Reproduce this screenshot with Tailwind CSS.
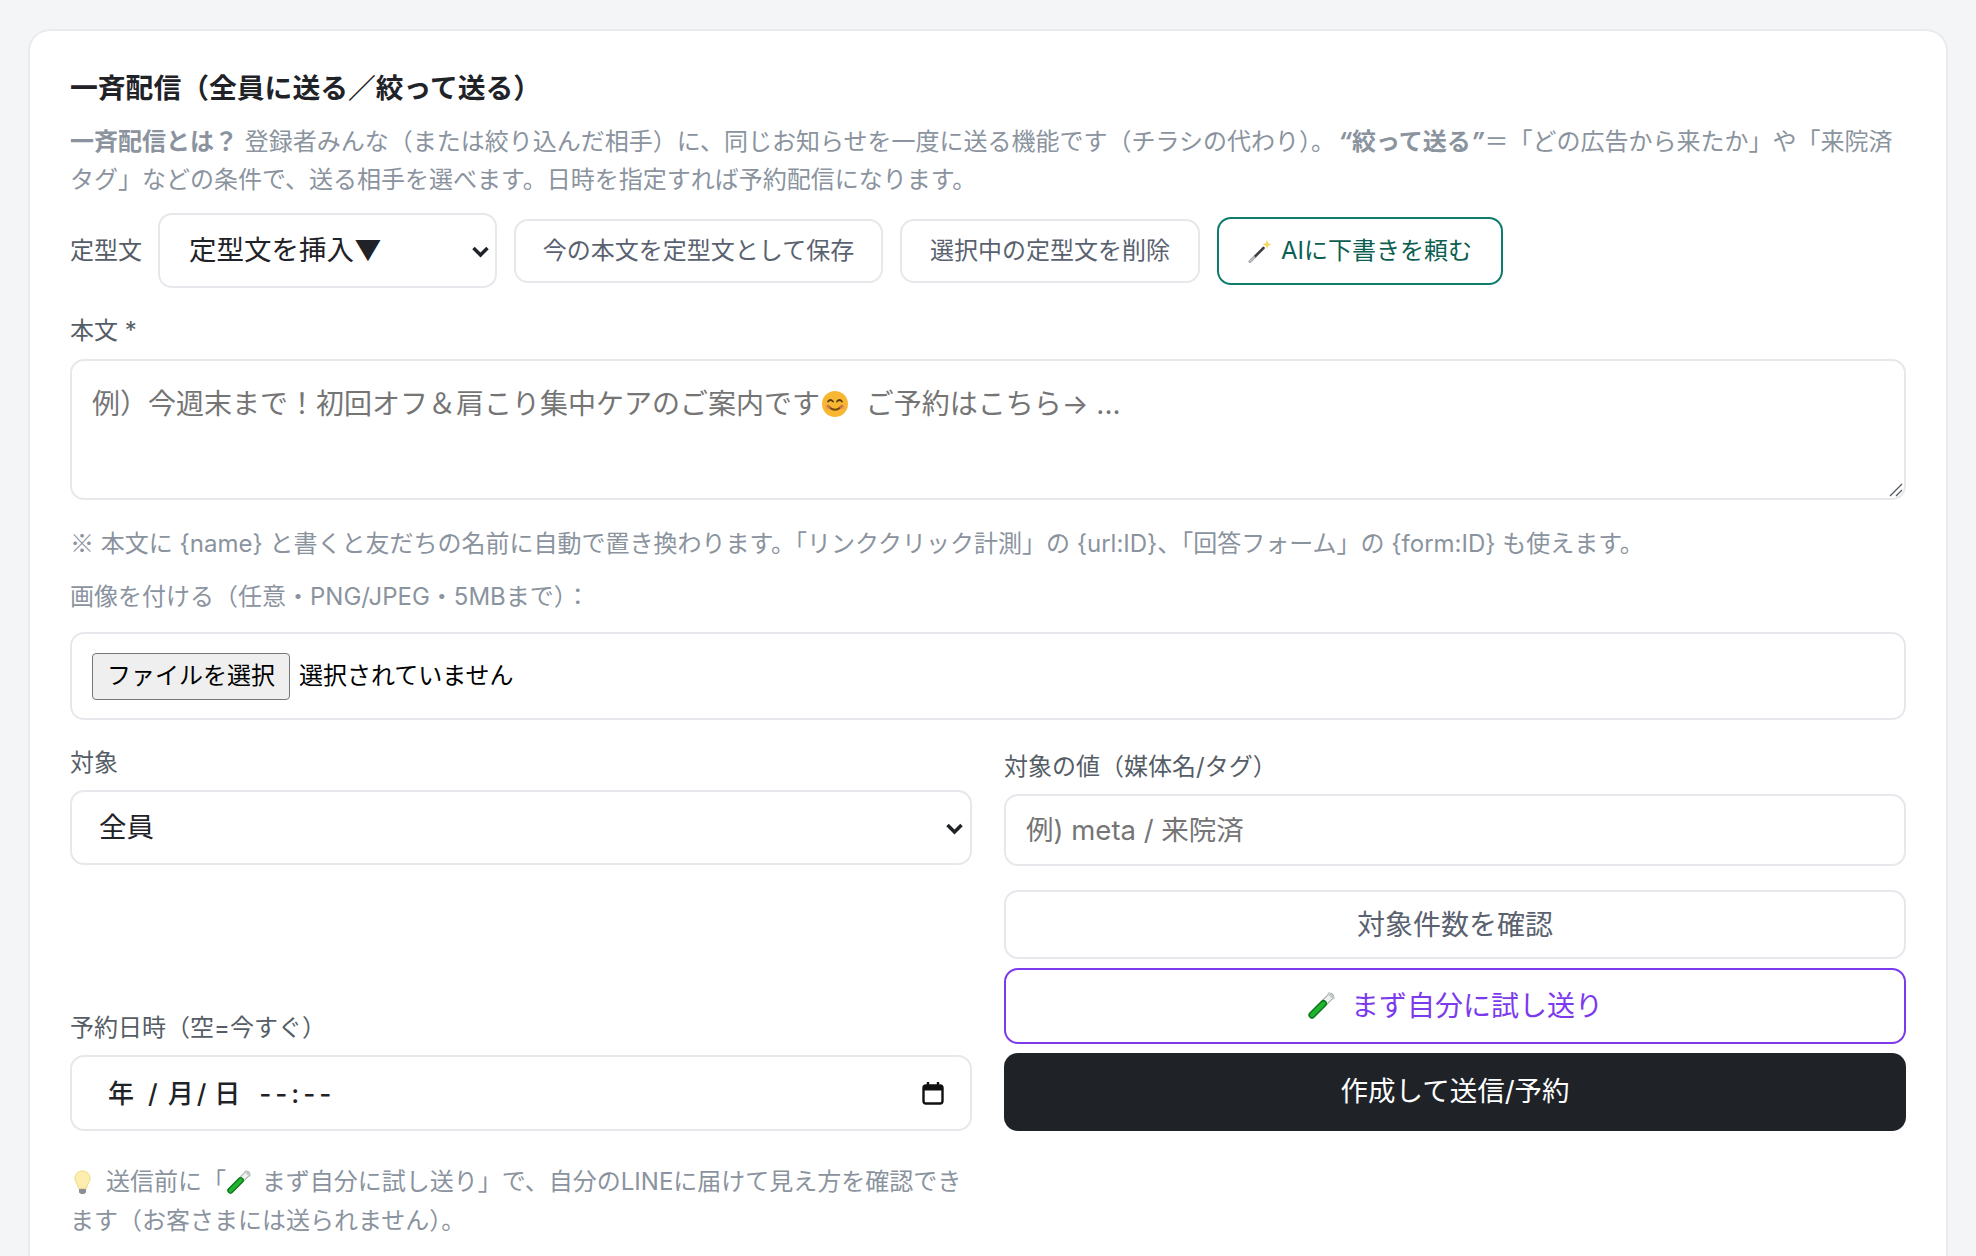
<!DOCTYPE html>
<html lang="ja">
  <head>
    <meta charset="UTF-8" />
    <meta name="viewport" content="width=device-width, initial-scale=1.0" />
    <title>一斉配信</title>
    <script src="https://cdn.jsdelivr.net/npm/@tailwindcss/browser@4"></script>
  </head>
  <body class="h-[1256px] overflow-hidden bg-[#f4f5f7] px-[28px] pt-[29px] font-['Inter','Noto_Sans_CJK_JP',sans-serif] text-[24px] text-[#1f2328]">
    <!-- test tube icon is reused through <use> -->
    <svg class="hidden">
      <symbol id="tube" viewBox="0 0 28 28">
        <path d="M5 23 23.500 4.500" stroke="#a3aaa5" stroke-width="7" stroke-linecap="round" />
        <path d="M5 23 23.500 4.500" stroke="#eef2ee" stroke-width="5" stroke-linecap="round" />
        <path d="M5 23 16.500 11.500" stroke="#0d7a1b" stroke-width="7" stroke-linecap="round" />
        <path d="M5 23 16.500 11.500" stroke="#1fb52f" stroke-width="4" stroke-linecap="round" />
        <path d="M22 1.500 26.500 6" stroke="#c3c9c4" stroke-width="2.500" stroke-linecap="round" />
      </symbol>
    </svg>

    <section class="h-[1227px] rounded-t-[22px] border-2 border-b-0 border-[#e9eaee] bg-white px-[40px] pt-[39px]">
      <h2 class="text-[27.800px] leading-[36px] font-bold">一斉配信（全員に送る／絞って送る）</h2>
      <p class="mt-[17px] leading-[38px] text-[#8a939e]">
        <b class="font-bold">一斉配信とは？</b> 登録者みんな（または絞り込んだ相手）に、同じお知らせを一度に送る機能です（チラシの代わり）。<b class="ml-[3px] font-bold"><i>“</i>絞って送る<i>”</i></b>＝「どの広告から来たか」や「来院済タグ」などの条件で、送る相手を選べます。日時を指定すれば予約配信になります。
      </p>

      <div class="mt-[14px] flex items-center gap-[17px]">
        <span class="mr-[-1px] text-[#555d66]">定型文</span>
        <div class="relative">
          <select class="h-[75px] w-[339px] appearance-none rounded-[14px] border-2 border-[#e7e8ec] bg-white pl-[29px] text-[27.500px] text-[#1f2328]">
            <option>定型文を挿入▼</option>
          </select>
          <svg class="absolute top-[32px] right-[7px] h-[13px] w-[19px]" viewBox="0 0 19 13"><path d="M2.500 3 9.500 10l7-7" fill="none" stroke="#1f2328" stroke-width="3.500" /></svg>
        </div>
        <button class="h-[64px] w-[369px] rounded-[14px] border-2 border-[#e7e8ec] bg-white text-[#5a6270]">今の本文を定型文として保存</button>
        <button class="h-[64px] w-[300px] rounded-[14px] border-2 border-[#e7e8ec] bg-white text-[#5a6270]">選択中の定型文を削除</button>
        <button class="flex h-[68px] w-[286px] items-center justify-center gap-[9px] rounded-[14px] border-[2.500px] border-[#0f7b6c] bg-white text-[#0b5e50]">
          <svg class="h-[24px] w-[24px]" viewBox="0 0 24 24">
            <path d="M2 22.500 15.500 9" stroke="#3c3f44" stroke-width="2.600" stroke-linecap="round" />
            <path d="M2 22.500 6 18.500" stroke="#b9bcc0" stroke-width="2.600" stroke-linecap="round" />
            <path d="m19 1 1.200 3.300L23.500 5.500l-3.300 1.200L19 10l-1.200-3.300L14.500 5.500l3.300-1.200Z" fill="#f5d75c" />
          </svg>
          AIに下書きを頼む
        </button>
      </div>

      <label class="mt-[27px] block leading-[32px] text-[#555d66]">本文 *</label>
      <div class="relative mt-[12px] h-[141px] rounded-[14px] border-2 border-[#e7e8ec] px-[20px] pt-[23px] text-[28px] leading-[40px] text-[#757575]">
        <span class="inline-flex items-center">例）今週末まで！初回オフ＆肩こり集中ケアのご案内です<svg class="mx-[1px] h-[28px] w-[28px]" viewBox="0 0 28 28">
            <circle cx="14" cy="14" r="13" fill="#f7b733" />
            <path d="M7 11.500q2.500-3 5 0M16 11.500q2.500-3 5 0" fill="none" stroke="#5a3a10" stroke-width="1.800" stroke-linecap="round" />
            <path d="M7 16q7 7.500 14 0" fill="none" stroke="#7a4a10" stroke-width="2" stroke-linecap="round" />
            <circle cx="7" cy="17" r="2.500" fill="#f2885e" opacity=".6" />
            <circle cx="21" cy="17" r="2.500" fill="#f2885e" opacity=".6" />
          </svg>&nbsp;&nbsp;ご予約はこちら→ ...</span>
        <svg class="absolute right-[1px] bottom-[1px] h-[15px] w-[15px]" viewBox="0 0 15 15"><path d="M14 2 2 14M14 8l-6 6" stroke="#55595f" stroke-width="1.300" /></svg>
      </div>

      <p class="mt-[25px] leading-[34px] text-[#8a939e]"><span class="font-['Noto_Sans_CJK_JP']">※</span> 本文に {name} と書くと友だちの名前に自動で置き換わります。「リンククリック計測」の {url:ID}、「回答フォーム」の {form:ID} も使えます。</p>
      <p class="mt-[19px] leading-[34px] text-[#8a939e]">画像を付ける（任意・PNG/JPEG・5MBまで）：</p>

      <div class="mt-[18px] flex h-[88px] items-center gap-[9px] rounded-[14px] border-2 border-[#e7e8ec] px-[20px] text-black">
        <button class="h-[47px] w-[198px] rounded-[4px] border-[1.500px] border-[#767676] bg-[#efefef]">ファイルを選択</button>
        <span>選択されていません</span>
      </div>

      <div class="mt-[26px] grid grid-cols-2 gap-x-[32px]">
        <div class="flex flex-col">
          <label class="leading-[34px] text-[#555d66]">対象</label>
          <div class="relative mt-[10px]">
            <select class="h-[75px] w-full appearance-none rounded-[14px] border-2 border-[#e7e8ec] bg-white pl-[27px] text-[27.500px] text-[#1f2328]">
              <option>全員</option>
            </select>
            <svg class="absolute top-[32px] right-[8px] h-[13px] w-[19px]" viewBox="0 0 19 13"><path d="M2.500 3 9.500 10l7-7" fill="none" stroke="#1f2328" stroke-width="3.500" /></svg>
          </div>

          <label class="mt-auto leading-[34px] text-[#555d66]">予約日時（空=今すぐ）</label>
          <div class="mt-[10px] flex h-[76px] items-center rounded-[14px] border-2 border-[#e7e8ec] pr-[26px] pl-[36px] text-[26px] font-medium text-[#1f2328]">
            <span>年</span>
            <span class="ml-[14px]">/</span>
            <span class="ml-[10px]">月</span>
            <span class="ml-[3px]">/</span>
            <span class="ml-[8px]">日</span>
            <span class="ml-[19px] tracking-[4px]">--:--</span>
            <svg class="ml-auto h-[24px] w-[22px]" viewBox="0 0 22 24">
              <rect x="1.500" y="4.500" width="19" height="18" rx="2.500" fill="none" stroke="#111" stroke-width="2.400" />
              <path d="M1.500 5h19v4.500h-19Z" fill="#111" />
              <path d="M6 1v4M16 1v4" stroke="#111" stroke-width="2.400" />
            </svg>
          </div>
        </div>

        <div class="flex flex-col">
          <label class="mt-[4px] leading-[34px] text-[#555d66]">対象の値（媒体名/タグ）</label>
          <input class="mt-[10px] h-[72px] rounded-[14px] border-2 border-[#e7e8ec] px-[20px] text-[27.500px] placeholder:text-[#757575]" placeholder="例) meta / 来院済" />
          <button class="mt-[24px] h-[69px] rounded-[14px] border-2 border-[#e7e8ec] bg-white text-[28px] text-[#5a6270]">対象件数を確認</button>
          <button class="mt-[9px] flex h-[76px] items-center justify-center gap-[16px] rounded-[14px] border-[2.500px] border-[#7c3aed] bg-white text-[28px] text-[#7c3aed]">
            <svg class="h-[28px] w-[28px]"><use href="#tube" /></svg>
            まず自分に試し送り
          </button>
          <button class="mt-[9px] h-[78px] rounded-[14px] bg-[#1f2328] text-[27.500px] text-white">作成して送信/予約</button>
        </div>
      </div>

      <p class="mt-[31px] w-[902px] leading-[39px] text-[#8a939e]">
        <svg class="mr-[15px] mb-[2px] ml-[4px] inline-block h-[25px] w-[17px]" viewBox="0 0 17 25">
          <path d="M8.500 1C4 1 1 4.300 1 8.300c0 3.700 3 5.700 3.500 10h8c.5-4.300 3.500-6.300 3.500-10C16 4.300 13 1 8.500 1Z" fill="#fdeeb0" stroke="#eed97e" stroke-width="1" />
          <path d="M5 19h7v3.500l-2 1.500H7l-2-1.500Z" fill="#8b8f94" />
        </svg>送信前に「<svg class="mr-[4px] mb-[2px] inline-block h-[25px] w-[25px]"><use href="#tube" /></svg> まず自分に試し送り」で、自分のLINEに届けて見え方を確認できます（お客さまには送られません）。
      </p>
    </section>
  </body>
</html>
